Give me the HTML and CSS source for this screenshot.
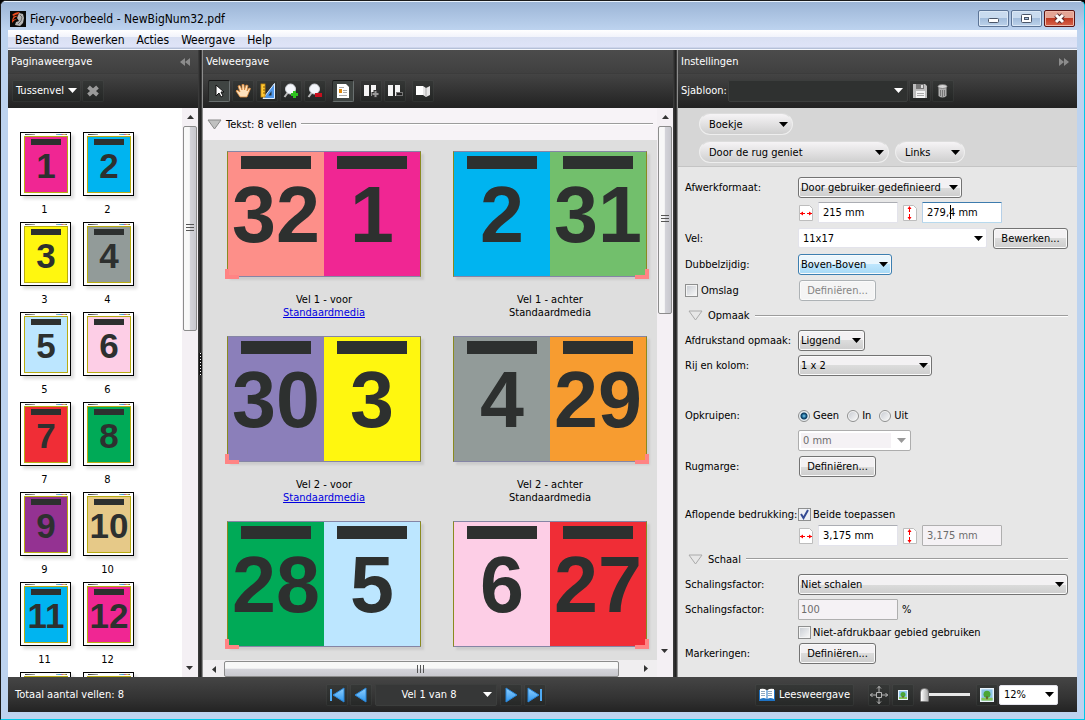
FILE: index.html
```html
<!DOCTYPE html>
<html lang="nl">
<head>
<meta charset="utf-8">
<title>Fiery-voorbeeld - NewBigNum32.pdf</title>
<link rel="stylesheet" href="styles.css">
</head>
<body>
<div class="window">
  <header class="titlebar">
    <svg class="app-icon" viewBox="0 0 16 16" width="16" height="16" aria-hidden="true"><rect width="16" height="16" fill="#0a0a0a"/><path d="M9 2l4 1 1 4-1 5-3 3-5-1 1-3 3-1-2-3z" fill="#b4b4b4"/><path d="M10 4l2 2-1 4-3 3" fill="none" stroke="#6a6a6a"/><path d="M2 4q3-3 8-3L8 3l2 0q-5 0-7 3 3-2 6-1-4 0-6 4 2-1 4-1-3 1-5 4 0-5 2-7z" fill="#f04e20"/></svg>
    <h1 class="title">Fiery-voorbeeld - NewBigNum32.pdf</h1>
    <div class="caption-buttons">
      <button class="cap" aria-label="Minimaliseren"><svg viewBox="0 0 29 15" width="29" height="15"><rect x="9.500" y="7.500" width="10" height="4" rx="1" fill="#fff" stroke="#4a5568"/></svg></button>
      <button class="cap" aria-label="Maximaliseren"><svg viewBox="0 0 29 15" width="29" height="15"><rect x="9.500" y="3.500" width="10" height="8" rx="1" fill="#fff" stroke="#4a5568"/><rect x="12.500" y="6.500" width="4" height="2" fill="#a5bedc" stroke="#4a5568"/></svg></button>
      <button class="cap close" aria-label="Sluiten"><svg viewBox="0 0 29 15" width="29" height="15"><path d="M11 4l7 7M18 4l-7 7" stroke="#5a2a2a" stroke-width="5"/><path d="M11 4l7 7M18 4l-7 7" stroke="#fff" stroke-width="3"/></svg></button>
    </div>
  </header>
  <nav class="menubar">
    <button>Bestand</button><button>Bewerken</button><button>Acties</button><button>Weergave</button><button>Help</button>
  </nav>

  <main class="panels">
    <section class="panel pages">
      <div class="panel-head">
        <div class="panel-title"><h2>Paginaweergave</h2><button class="fold" aria-label="Inklappen"><svg viewBox="0 0 10 8" width="10" height="8"><path d="M5 0v8L0 4zM10 0v8L5 4z"/></svg></button></div>
        <div class="toolbar">
          <button class="tool text">Tussenvel <svg viewBox="0 0 9 5" width="9" height="5"><path d="M0 0h9L4.500 5z" fill="#fff"/></svg></button>
          <button class="tool" aria-label="Verwijderen"><svg viewBox="0 0 16 16" width="16" height="16"><path d="M3.500 4l9 8M12.500 4l-9 8" stroke="#9a9a9a" stroke-width="4"/></svg></button>
        </div>
      </div>
      <div class="page-area">
        <ul class="thumbs">
          <li><div class="leaf"><div class="art magenta">1</div></div><span>1</span></li>
          <li><div class="leaf"><div class="art cyan">2</div></div><span>2</span></li>
          <li><div class="leaf"><div class="art yellow">3</div></div><span>3</span></li>
          <li><div class="leaf"><div class="art gray">4</div></div><span>4</span></li>
          <li><div class="leaf"><div class="art sky">5</div></div><span>5</span></li>
          <li><div class="leaf"><div class="art pink">6</div></div><span>6</span></li>
          <li><div class="leaf"><div class="art red">7</div></div><span>7</span></li>
          <li><div class="leaf"><div class="art green">8</div></div><span>8</span></li>
          <li><div class="leaf"><div class="art purple">9</div></div><span>9</span></li>
          <li><div class="leaf"><div class="art sand">10</div></div><span>10</span></li>
          <li><div class="leaf"><div class="art cyan">11</div></div><span>11</span></li>
          <li><div class="leaf"><div class="art magenta">12</div></div><span>12</span></li>
          <li><div class="leaf"><div class="art yellow"></div></div></li>
          <li><div class="leaf"><div class="art yellow"></div></div></li>
        </ul>
        <div class="vscroll" aria-hidden="true"><i class="up"></i><i class="thumb short"></i><i class="rest"></i><i class="down"></i></div>
      </div>
    </section>

    <div class="splitter"><i class="grip"></i></div>

    <section class="panel sheets">
      <div class="panel-head">
        <div class="panel-title"><h2>Velweergave</h2></div>
        <div class="toolbar grouped">
          <div class="group">
            <button class="tool active" aria-label="Selecteren"><svg viewBox="0 0 16 16" width="16" height="16"><path d="M5 2v11l3-3 2 4 2-1-2-4h3z" fill="#fff" stroke="#111" stroke-width="1"/></svg></button>
            <button class="tool" aria-label="Verschuiven"><svg viewBox="0 0 16 16" width="16" height="16"><path d="M5 14L1 8l1-1 3 2-2-6 2-.5L7 7V1.500h2L9.500 7 11 2l2 .5L12 8l2-3 1.500.5L12 14z" fill="#ffe2bd" stroke="#d98a3c" stroke-width=".8"/></svg></button>
            <button class="tool" aria-label="Meten"><svg viewBox="0 0 16 16" width="16" height="16"><path d="M15.500.5v15H4z" fill="#4f97ea" stroke="#dcecff"/><path d="M12.500 8v4.500h-3z" fill="#263238"/><rect x="2" y="1" width="4" height="13" fill="#ffc933" stroke="#c98a10" stroke-width=".8"/><path d="M4 4h2M4 7h2M4 10h2" stroke="#8a5a00"/></svg></button>
            <button class="tool" aria-label="Inzoomen"><svg viewBox="0 0 16 16" width="16" height="16"><path d="M1.500 14l3-4" stroke="#bbb" stroke-width="2"/><circle cx="7.500" cy="6" r="5" fill="#f4f6fa" stroke="#cfd3d8"/><path d="M11.500 8v7M8 11.500h7" stroke="#2fc11f" stroke-width="3"/></svg></button>
            <button class="tool" aria-label="Uitzoomen"><svg viewBox="0 0 16 16" width="16" height="16"><path d="M1.500 14l3-4" stroke="#bbb" stroke-width="2"/><circle cx="7.500" cy="6" r="5" fill="#f4f6fa" stroke="#cfd3d8"/><path d="M8 12h7" stroke="#c80f1e" stroke-width="4"/></svg></button>
          </div>
          <div class="group">
            <button class="tool active" aria-label="Inhoud tonen"><svg viewBox="0 0 16 16" width="16" height="16"><path d="M2 1h9l3 3v11H2z" fill="#fff"/><path d="M4 4.500h5M8 7.500h4M8 9.500h4M4 12.500h8" stroke="#aaa"/><rect x="4" y="6" width="3" height="4" fill="#e08a10"/></svg></button>
          </div>
          <div class="group">
            <button class="tool" aria-label="Vel toevoegen"><svg viewBox="0 0 16 16" width="16" height="16"><path d="M1 2h5v11H1zM8 2h5v11H8z" fill="#f5f5f5"/><path d="M12.500 7v8M8.500 11h7" stroke="#333" stroke-width="4"/><path d="M12.500 8v6M9.500 11h6" stroke="#999" stroke-width="2"/></svg></button>
            <button class="tool" aria-label="Vel verwijderen"><svg viewBox="0 0 16 16" width="16" height="16"><path d="M1 2h5v11H1zM8 2h5v11H8z" fill="#f5f5f5"/><path d="M9 11h7" stroke="#777" stroke-width="4"/><path d="M10 11h5" stroke="#222" stroke-width="2"/></svg></button>
          </div>
          <div class="group">
            <button class="tool" aria-label="Boekje"><svg viewBox="0 0 16 16" width="16" height="16"><path d="M1 3h7v9H1z" fill="#fff"/><path d="M8 3l3 2 4-2v9l-4 2-3-2z" fill="#e6e6e6"/><path d="M11 5v9" stroke="#aaa"/></svg></button>
          </div>
        </div>
      </div>
      <div class="sheet-area">
        <div class="sheet-main">
          <div class="section-head"><i class="twist filled"></i><h3>Tekst: 8 vellen</h3><hr></div>
          <div class="sheet-scroll">
            <div class="sheet-grid">
              <figure><div class="sheet front"><div class="art salmon">32</div><div class="art magenta">1</div></div><figcaption>Vel 1 - voor<br><a href="#media">Standaardmedia</a></figcaption></figure>
              <figure><div class="sheet back"><div class="art cyan">2</div><div class="art leafgreen">31</div></div><figcaption>Vel 1 - achter<br>Standaardmedia</figcaption></figure>
              <figure><div class="sheet front"><div class="art violet">30</div><div class="art yellow">3</div></div><figcaption>Vel 2 - voor<br><a href="#media">Standaardmedia</a></figcaption></figure>
              <figure><div class="sheet back"><div class="art gray">4</div><div class="art orange">29</div></div><figcaption>Vel 2 - achter<br>Standaardmedia</figcaption></figure>
              <figure><div class="sheet front"><div class="art green">28</div><div class="art sky">5</div></div></figure>
              <figure><div class="sheet back"><div class="art pink">6</div><div class="art red">27</div></div></figure>
            </div>
          </div>
          <div class="hscroll" aria-hidden="true"><i class="left"></i><i class="thumb"></i><i class="rest"></i><i class="right"></i></div>
        </div>
        <div class="vscroll" aria-hidden="true"><i class="up"></i><i class="thumb mid"></i><i class="rest"></i><i class="down"></i><i class="corner"></i></div>
      </div>
    </section>

    <div class="splitter"></div>

    <section class="panel settings">
      <div class="panel-head">
        <div class="panel-title"><h2>Instellingen</h2><button class="fold dim" aria-label="Inklappen"><svg viewBox="0 0 10 8" width="10" height="8"><path d="M0 0v8l5-4zM5 0v8l5-4z"/></svg></button></div>
        <div class="toolbar">
          <label class="tpl-label" for="tpl">Sjabloon:</label>
          <select id="tpl" class="dark-select"><option></option></select>
          <button class="tool" aria-label="Opslaan"><svg viewBox="0 0 16 16" width="16" height="16"><path d="M1 1h12l2 2v12H1z" fill="#bdbdbd"/><rect x="4" y="1" width="8" height="5" fill="#777"/><rect x="9" y="2" width="2" height="3" fill="#ddd"/><rect x="4" y="8" width="9" height="7" fill="#f4f4f4"/><path d="M5 10.500h7M5 12.500h7" stroke="#aaa"/></svg></button>
          <button class="tool" aria-label="Verwijderen"><svg viewBox="0 0 16 16" width="16" height="16"><path d="M3.500 5h8v8q-4 3-8 0z" fill="#b0b0b0"/><ellipse cx="7.500" cy="3.500" rx="4.500" ry="2" fill="#d5d5d5" stroke="#777" stroke-width=".8"/><path d="M5.500 7v6M7.500 7v7M9.500 7v6" stroke="#777"/></svg></button>
        </div>
      </div>
      <div class="binding">
        <div class="pill-row"><select class="pill w94" aria-label="Taak"><option>Boekje</option></select></div>
        <div class="pill-row"><select class="pill w190" aria-label="Binding"><option>Door de rug geniet</option></select><select class="pill w70" aria-label="Rand"><option>Links</option></select></div>
      </div>
      <form class="form">
        <div class="row"><label for="trim">Afwerkformaat:</label><select id="trim" class="sel w164"><option>Door gebruiker gedefinieerd</option></select></div>
        <div class="row indent">
          <svg class="dim-icon" viewBox="0 0 14 16" width="14" height="16"><use href="#wide"/></svg><input class="txt" value="215 mm" aria-label="Breedte">
          <svg class="dim-icon" viewBox="0 0 14 16" width="14" height="16"><use href="#tall"/></svg><span class="caret-box"><input class="txt focus" value="279,4 mm" aria-label="Hoogte"><i class="caret"></i></span>
        </div>
        <div class="row tall"><label for="vel">Vel:</label><select id="vel" class="combo grow"><option>11x17</option></select><button type="button" class="btn w75">Bewerken...</button></div>
        <div class="row tall"><label for="duplex">Dubbelzijdig:</label><select id="duplex" class="sel hot w94"><option>Boven-Boven</option></select></div>
        <div class="row tall"><span class="lab"><input type="checkbox" id="cover" class="box"><label for="cover">Omslag</label></span><button type="button" class="btn w79" disabled>Definiëren...</button></div>
        <div class="row section"><i class="twist"></i><h3>Opmaak</h3><hr></div>
        <div class="row"><label for="orient">Afdrukstand opmaak:</label><select id="orient" class="sel w66"><option>Liggend</option></select></div>
        <div class="row"><label for="rows">Rij en kolom:</label><select id="rows" class="sel w134"><option>1 x 2</option></select></div>
        <div class="row gap-above"><span class="lab">Opkruipen:</span>
          <input type="radio" class="radio" name="creep" id="c1" checked><label class="opt" for="c1">Geen</label>
          <input type="radio" class="radio" name="creep" id="c2"><label class="opt" for="c2">In</label>
          <input type="radio" class="radio" name="creep" id="c3"><label class="opt" for="c3">Uit</label></div>
        <div class="row indent"><select class="combo off w113" disabled aria-label="Opkruipwaarde"><option>0 mm</option></select></div>
        <div class="row tall"><span class="lab">Rugmarge:</span><button type="button" class="btn w79">Definiëren...</button></div>
        <div class="row compact gap-above"><span class="lab">Aflopende bedrukking:</span><input type="checkbox" id="both" class="box" checked><label class="opt" for="both">Beide toepassen</label></div>
        <div class="row compact indent">
          <svg class="dim-icon" viewBox="0 0 14 16" width="14" height="16"><use href="#wide"/></svg><input class="txt" value="3,175 mm" aria-label="Afloop horizontaal">
          <svg class="dim-icon" viewBox="0 0 14 16" width="14" height="16"><use href="#tall"/></svg><input class="txt" value="3,175 mm" disabled aria-label="Afloop verticaal">
        </div>
        <div class="row tall section"><i class="twist"></i><h3>Schaal</h3><hr></div>
        <div class="row"><label for="scale">Schalingsfactor:</label><select id="scale" class="sel grow"><option>Niet schalen</option></select></div>
        <div class="row"><label for="pct">Schalingsfactor:</label><input id="pct" class="txt pct" value="100" disabled><span>%</span></div>
        <div class="row compact indent"><input type="checkbox" id="np" class="box"><label class="opt" for="np">Niet-afdrukbaar gebied gebruiken</label></div>
        <div class="row compact"><span class="lab">Markeringen:</span><button type="button" class="btn w79">Definiëren...</button></div>
      </form>
    </section>
  </main>

  <footer class="status">
    <p>Totaal aantal vellen: 8</p>
    <div class="pager">
      <button class="tool" aria-label="Eerste vel"><svg viewBox="0 0 16 16" width="16" height="16"><use href="#first"/></svg></button>
      <button class="tool" aria-label="Vorig vel"><svg viewBox="0 0 16 16" width="16" height="16"><path d="M13 1v14L2 8z" fill="url(#blue)" stroke="#2a86d8"/></svg></button>
      <select class="dark-select where" aria-label="Vel kiezen"><option>Vel 1 van 8</option></select>
      <button class="tool" aria-label="Volgend vel"><svg viewBox="0 0 16 16" width="16" height="16"><path d="M3 1v14l11-7z" fill="url(#blue)" stroke="#2a86d8"/></svg></button>
      <button class="tool" aria-label="Laatste vel"><svg viewBox="0 0 16 16" width="16" height="16"><g transform="matrix(-1 0 0 1 16 0)"><use href="#first"/></g></svg></button>
    </div>
    <div class="zoom">
      <button class="tool text read"><svg viewBox="0 0 16 16" width="16" height="16"><path d="M0 3h16v11H0z" fill="#1f73c4"/><path d="M1 2q4-1 6.500 1v9Q5 10 1 12zM15 2q-4-1-6.500 1v9Q11 10 15 12z" fill="#fff"/><path d="M2 4.500h4M2 6.500h4M2 8.500h4M9 4.500h4M9 6.500h4M9 8.500h4" stroke="#8fa8c0"/></svg>Leesweergave</button>
      <button class="tool" aria-label="Passend"><svg viewBox="0 0 18 18" width="18" height="18"><path d="M6.500 6.500h5v5h-5zM9 0v6M9 12v6M0 9h6M12 9h6M7 2.500l2-2 2 2M7 15.500l2 2 2-2M2.500 7l-2 2 2 2M15.500 7l2 2-2 2" fill="none" stroke="#b5b5b5"/></svg></button>
      <button class="tool" aria-label="Kleiner"><svg viewBox="0 0 10 10" width="10" height="10"><use href="#picture"/></svg></button>
      <input class="slider" type="range" min="0" max="100" value="0" aria-label="Zoom">
      <button class="tool" aria-label="Groter"><svg viewBox="0 0 10 10" width="14" height="14"><use href="#picture"/></svg></button>
      <select class="combo w59" aria-label="Zoompercentage"><option>12%</option></select>
    </div>
  </footer>
</div>

<svg class="defs" width="0" height="0" aria-hidden="true">
  <defs>
    <linearGradient id="blue" x1="0" y1="0" x2="0" y2="1"><stop offset="0" stop-color="#8fd0ff"/><stop offset="1" stop-color="#2f96ee"/></linearGradient>
    <g id="first"><path d="M1 2h2v12H1z" fill="#4fabf5"/><path d="M15 1v14L4 8z" fill="url(#blue)" stroke="#2a86d8"/></g>
    <g id="wide"><path d="M.5.500h10l3 3v12H.500z" fill="#fff" stroke="#bdbdbd"/><path d="M1 8.500h5M8 8.500h5" stroke="#f00"/><path d="M1 8.500l3-2v4zM13 8.500l-3-2v4z" fill="#f00"/></g>
    <g id="tall"><path d="M.5.500h10l3 3v12H.500z" fill="#fff" stroke="#bdbdbd"/><path d="M6.500 2v5M6.500 9v5" stroke="#f00"/><path d="M6.500 1l2 3h-4zM6.500 15l2-3h-4z" fill="#f00"/></g>
    <g id="picture"><rect width="10" height="10" fill="#e8f3fb"/><rect x="1" y="1" width="8" height="8" fill="#8cc4e8"/><rect x="1" y="7" width="8" height="2" fill="#86c45a"/><circle cx="5" cy="4.500" r="2.500" fill="#4aa636"/><rect x="4.500" y="6" width="1" height="2" fill="#6b4a1e"/></g>
  </defs>
</svg>
</body>
</html>
```

FILE: styles.css
```css
*, *::before, *::after { box-sizing: border-box; }
html, body { height: 100%; margin: 0; }
body { background: #000; color: #000; font: 11px/13px "DejaVu Sans Condensed", "Noto Sans", sans-serif; }
h1, h2, h3, p, figure, ul { margin: 0; padding: 0; font-size: inherit; font-weight: normal; }
ul { list-style: none; }
button, select, input { font: inherit; color: inherit; margin: 0; }
button { padding: 0; border: 0; background: none; }
svg { display: block; flex: none; }
i { display: block; flex: none; }
.defs { position: absolute; }

.window { height: 100vh; display: flex; flex-direction: column; padding: 0 7px 7px; background: #bdd3ef; border: 1px solid #1a1a1a; border-right-color: #00c8e8; border-bottom-color: #00c8e8; border-radius: 6px 6px 0 0; overflow: hidden; }

/* Title bar and menu */
.titlebar { flex: none; height: 29px; margin: 0 -7px; padding: 5px 9px 0; display: flex; align-items: center; gap: 4px; border-top: 1px solid #e8f2fc; background: linear-gradient(#9cb5d6, #bdd3ef); }
.title { flex: 1; font-size: 12px; line-height: 16px; }
.caption-buttons { display: flex; gap: 2px; }
.cap { width: 31px; height: 17px; border: 1px solid #5c7496; border-radius: 2px; background: linear-gradient(#c9dbef 50%, #a3bddc 50%, #bcd2ea); box-shadow: inset 0 0 0 1px #dbe8f6; }
.close { border-color: #5a1414; background: linear-gradient(#e4a494 50%, #c03a22 50%, #d8644c); box-shadow: inset 0 0 0 1px #efb8a8; }
.menubar { flex: none; height: 20px; display: flex; gap: 12px; padding: 1px 7px 0; border-bottom: 1px solid #f4f7fc; background: linear-gradient(#fff, #f2f4fb 35%, #d9e0f2 36%, #dfe4f8 90%, #b5c0d8 95%); }
.menubar button { font-size: 12px; }

/* Panels */
.panels { flex: 1; min-height: 0; display: grid; grid-template-columns: 190px 5px minmax(0, 1fr) 5px 399px; }
.panel { min-width: 0; min-height: 0; display: flex; flex-direction: column; }
.panel-head { flex: none; color: #fff; background: linear-gradient(#4c4c4c, #404040 39%, #333 40%, #444 41%, #222); }
.panel-title { height: 23px; padding: 0 8px 0 3px; display: flex; align-items: center; justify-content: space-between; }
.fold svg { fill: #8c8c8c; }
.toolbar { height: 35px; padding: 0 4px; display: flex; align-items: center; gap: 1px; }
.grouped { gap: 6px; padding-left: 5px; }
.group { display: flex; gap: 2px; }
.tool { flex: none; width: 22px; height: 22px; display: flex; align-items: center; justify-content: center; border: 1px solid rgba(255, 255, 255, .06); border-radius: 2px; background: rgba(20, 30, 26, .2); }
.tool.active { border: 1px solid #6a7070; border-top-color: #141414; border-left-color: #242424; background: #3f4442; }
.tool.text { width: auto; padding: 0 3px; gap: 4px; }
.splitter { display: flex; flex-direction: column; justify-content: center; background: linear-gradient(90deg, #3a3a3a 1px, #222 2px 3px, #555 4px, #8c8c8c 4px); }
.grip { width: 3px; height: 22px; margin-left: 1px; background: repeating-linear-gradient(#fff 0 1px, #111 1px 3px); border: solid #111; border-width: 0 1px; }

/* Scroll bars */
.vscroll { width: 16px; flex: none; display: flex; flex-direction: column; background: #f4f0f4; }
.hscroll { height: 17px; flex: none; display: flex; padding-top: 1px; background: #f0eef0; }
.up, .down { height: 18px; background: no-repeat center url("data:image/svg+xml,%3Csvg xmlns='http://www.w3.org/2000/svg' width='7' height='4'%3E%3Cpath d='M0 4h7L3.500 0z' fill='%23333'/%3E%3C/svg%3E"); }
.down { transform: rotate(180deg); }
.left, .right { width: 21px; background: no-repeat center url("data:image/svg+xml,%3Csvg xmlns='http://www.w3.org/2000/svg' width='4' height='7'%3E%3Cpath d='M4 0v7L0 3.500z' fill='%23333'/%3E%3C/svg%3E"); }
.right { transform: rotate(180deg); }
.corner { height: 17px; }
.rest { flex: 1; }
.thumb { border: 1px solid #8c8c8c; border-radius: 2px; }
.vscroll .thumb { margin: 0 1px; background: repeating-linear-gradient(#555 0 1px, transparent 1px 3px) center / 8px 9px no-repeat, linear-gradient(90deg, #f8f8f8 45%, #d4d4da 50%, #c8c8ce); }
.hscroll .thumb { width: 87%; background: repeating-linear-gradient(90deg, #555 0 1px, transparent 1px 3px) center / 9px 8px no-repeat, linear-gradient(#f8f8f8 45%, #d4d4da 50%, #c8c8ce); }
.short { height: 36%; }
.mid { height: 33%; }

/* Page artwork */
.art { flex: 1; text-align: center; color: #2d302f; font-family: "Liberation Sans", sans-serif; font-weight: bold; white-space: nowrap; }
.art::before { content: ""; display: block; background: #2d302f; }
.magenta { background: #f02693; } .cyan { background: #00b4f0; } .yellow { background: #fff70f; }
.gray { background: #929b99; } .sky { background: #bce6ff; } .pink { background: #fdcee6; }
.red { background: #f02d36; } .green { background: #00aa57; } .purple { background: #943292; }
.sand { background: #e6c988; } .salmon { background: #fd8f89; } .leafgreen { background: #72bf6c; }
.violet { background: #8b7fba; } .orange { background: #f79c30; }

.page-area { flex: 1; min-height: 0; display: flex; background: #fff; }
.thumbs { flex: 1; overflow: hidden; padding: 24px 0 0 12px; display: grid; grid-template-columns: 51px 51px; grid-auto-rows: 90px; column-gap: 12px; }
.thumbs li { text-align: center; }
.thumbs span { display: block; margin: 7px 0 0 -2px; }
.leaf { height: 64px; display: flex; padding: 3px 2px 2px 3px; border: 1px solid #000; box-shadow: 3px 3px 3px #ddd; background: linear-gradient(90deg, #333, #aaa) 4px 1px / 10px 1px no-repeat, linear-gradient(90deg, #aaa, #2ab0e0 35%, #d04a8a 55%, #ddc94a 75%, #555) 35px 1px / 11px 1px no-repeat, #fff; }
.leaf .art { border: 1px solid #b8ac10; font-size: 35px; line-height: 37px; }
.leaf .art::before { height: 6px; margin: 2px 6px; }

.sheet-area { flex: 1; min-height: 0; display: flex; }
.sheet-main { flex: 1; min-width: 0; display: flex; flex-direction: column; background: #dedede; }
.section-head { flex: none; height: 32px; padding: 0 4px; display: flex; align-items: center; gap: 4px; background: #f7f3f7; }
hr { flex: 1; height: 2px; margin: 0; border: 0; border-top: 1px solid #9c9c9c; background: #fff; }
.twist { width: 15px; height: 11px; background: center no-repeat url("data:image/svg+xml,%3Csvg xmlns='http://www.w3.org/2000/svg' width='15' height='11'%3E%3Cpath d='M1 1h13L7.500 10z' fill='%23e7e7e7' stroke='%23aaa'/%3E%3C/svg%3E"); }
.filled { background-image: url("data:image/svg+xml,%3Csvg xmlns='http://www.w3.org/2000/svg' width='15' height='11'%3E%3Cpath d='M1 1h13L7.500 10z' fill='%23c0c0c0' stroke='%23888'/%3E%3C/svg%3E"); }
.sheet-scroll { flex: 1; min-height: 0; overflow: hidden; padding: 11px 0 0 24px; }
.sheet-grid { display: grid; grid-template-columns: 194px 194px; grid-auto-rows: 185px; column-gap: 32px; text-align: center; }
.sheet { position: relative; height: 126px; display: flex; border: 1px solid #8a8a20; border-top-color: rgba(0, 0, 80, .4); border-bottom-color: rgba(0, 0, 80, .4); box-shadow: 3px 3px 2px #ccc; }
.sheet .art { font-size: 79px; line-height: 82px; width: 96px; }
.sheet .art::before { height: 13px; margin: 4px 13px 5px; }
.sheet::after { content: ""; position: absolute; bottom: -3px; width: 14px; height: 10px; border: 0 solid #ff8484; border-bottom-width: 4px; }
.front::after { left: -3px; border-left-width: 4px; }
.back::after { right: -3px; border-right-width: 4px; }
figcaption { padding-top: 16px; }
a { color: #0000e0; }

/* Settings */
.settings { background: #e7e7e7; }
.tpl-label { width: 46px; white-space: nowrap; margin-left: -1px; }
select { appearance: none; border-radius: 2px; outline: 0; }
.dark-select { width: 180px; height: 22px; border: 1px solid #3c3e3d; color: #fff; background: url("data:image/svg+xml,%3Csvg xmlns='http://www.w3.org/2000/svg' width='9' height='5'%3E%3Cpath d='M0 0h9L4.500 5z' fill='%23fff'/%3E%3C/svg%3E") right 4px center no-repeat, #2f3130; }
.binding { flex: none; height: 59px; padding: 5px 21px 0; display: flex; flex-direction: column; gap: 6px; background: #d6d6d6; border-bottom: 1px solid #c4c4c4; }
.pill-row { display: flex; gap: 6px; }
.pill, .sel, .combo { --arrow: url("data:image/svg+xml,%3Csvg xmlns='http://www.w3.org/2000/svg' width='9' height='5'%3E%3Cpath d='M0 0h9L4.500 5z'/%3E%3C/svg%3E"); }
.pill { height: 22px; padding: 0 9px; border: 1px solid #eee; border-top-color: #ddd; border-radius: 11px; background: var(--arrow) right 4px center no-repeat, linear-gradient(#f6f4f6, #cfcfcf); }
.form { padding: 8px 9px 0 7px; }
.row { height: 25px; display: flex; align-items: center; }
.tall { height: 26px; }
.compact { height: 21px; }
.gap-above { margin-top: 25px; }
.row > label:first-child, .lab { flex: none; width: 113px; white-space: nowrap; }
.lab { display: flex; align-items: center; gap: 3px; }
.indent { padding-left: 113px; }
.section { gap: 5px; padding-left: 3px; }
.sel, .btn { height: 21px; border: 1px solid #737373; border-radius: 3px; box-shadow: inset 0 0 0 1px #fafafa; }
.sel { padding: 0 2px; background: var(--arrow) right 3px center no-repeat, linear-gradient(#f3f1f3 50%, #dcdcdc 50%, #cdcdcd); }
.hot { border-color: #3c7fb1; background: var(--arrow) right 3px center no-repeat, linear-gradient(#eaf6fd 50%, #bee6fd 50%, #a7d9f5); }
.btn { background: linear-gradient(#f3f1f3 50%, #dcdcdc 50%, #cdcdcd); }
.btn:disabled { color: #848484; border-color: #adb2b5; background: #f4f4f4; }
.combo { height: 20px; padding: 0 4px; border: 1px solid #e3e3eb; background: var(--arrow) right 3px center no-repeat, #fff; }
.combo.off { height: 21px; color: #6d6d6d; border-color: #adadad; opacity: 1; background: url("data:image/svg+xml,%3Csvg xmlns='http://www.w3.org/2000/svg' width='9' height='5'%3E%3Cpath d='M0 0h9L4.500 5z' fill='%23999'/%3E%3C/svg%3E") right 4px center no-repeat, linear-gradient(#f5f2f5, #f5f2f5) 2px 2px / 90px 15px no-repeat, #fff; }
.grow { flex: 1; min-width: 0; }
.grow + .btn { margin-left: 6px; }
.w59 { width: 59px; } .w66 { width: 67px; } .w70 { width: 70px; } .w75 { width: 75px; } .w79 { width: 77px; margin-left: 1px; }
.w94 { width: 94px; } .w113 { width: 113px; } .w134 { width: 134px; } .w164 { width: 164px; } .w190 { width: 190px; }
.txt { width: 80px; height: 21px; padding: 0 4px; border: 1px solid #e3e3eb; border-top-color: #abadb3; border-radius: 1px; background: #fff; outline: 0; }
.txt:disabled { color: #6d6d6d; border-color: #afafaf; background: #f5f2f5; }
.focus { border-color: #3d7bad #b5cfe7 #b7d9ed; }
.pct { width: 100px; margin-right: 4px; padding: 0 2px; }
.dim-icon { margin: 0 5px 0 1px; }
.txt + .dim-icon { margin-left: 5px; }
.caret-box { position: relative; display: flex; }
.caret { position: absolute; left: 28px; top: 3px; width: 1px; height: 14px; background: #000; }
.box, .radio { appearance: none; flex: none; width: 13px; height: 13px; border: 1px solid #8e8f8f; background: linear-gradient(135deg, #cbcfd5, #f6f6f6) content-box, #f4f4f4; padding: 1px; }
.box:checked { background: center no-repeat url("data:image/svg+xml,%3Csvg xmlns='http://www.w3.org/2000/svg' width='11' height='11'%3E%3Cpath d='M2 5l2.500 4L9 1' fill='none' stroke='%23354b94' stroke-width='2'/%3E%3C/svg%3E"), #eef0f4; }
.radio { width: 12px; height: 12px; border-radius: 50%; }
.radio:checked { background: radial-gradient(circle at 5px 5px, #7fd4f5, #1a5f8c 2px, #0c3a5c 3px, #e8eef2 4px); }
.opt { margin: 0 8px 0 3px; }
.box + .opt { margin-left: 2px; }

/* Status bar */
.status { flex: none; height: 35px; display: grid; grid-template-columns: 195px minmax(0, 1fr) 404px; align-items: center; color: #fff; background: linear-gradient(#454545, #333 60%, #232323); }
.status p { padding-left: 7px; }
.pager, .zoom { display: flex; align-items: center; gap: 2px; }
.pager { justify-content: center; padding-right: 4px; }
.where { width: 122px; text-align: center; text-align-last: center; padding-right: 14px; margin: 0 1px; background-color: #363737; }
.zoom { justify-content: flex-end; padding-right: 19px; }
.read { margin-right: 12px; }
.zoom .combo { color: #000; margin-left: -1px; }
.slider { appearance: none; width: 50px; height: 16px; margin: 0 4px; background: linear-gradient(#e8e8e8, #e8e8e8) center / 100% 3px no-repeat; }
.slider::-webkit-slider-thumb { appearance: none; width: 9px; height: 14px; border: 1px solid #777; border-radius: 4px 4px 1px 1px; background: linear-gradient(90deg, #fff, #aaa); }
```
